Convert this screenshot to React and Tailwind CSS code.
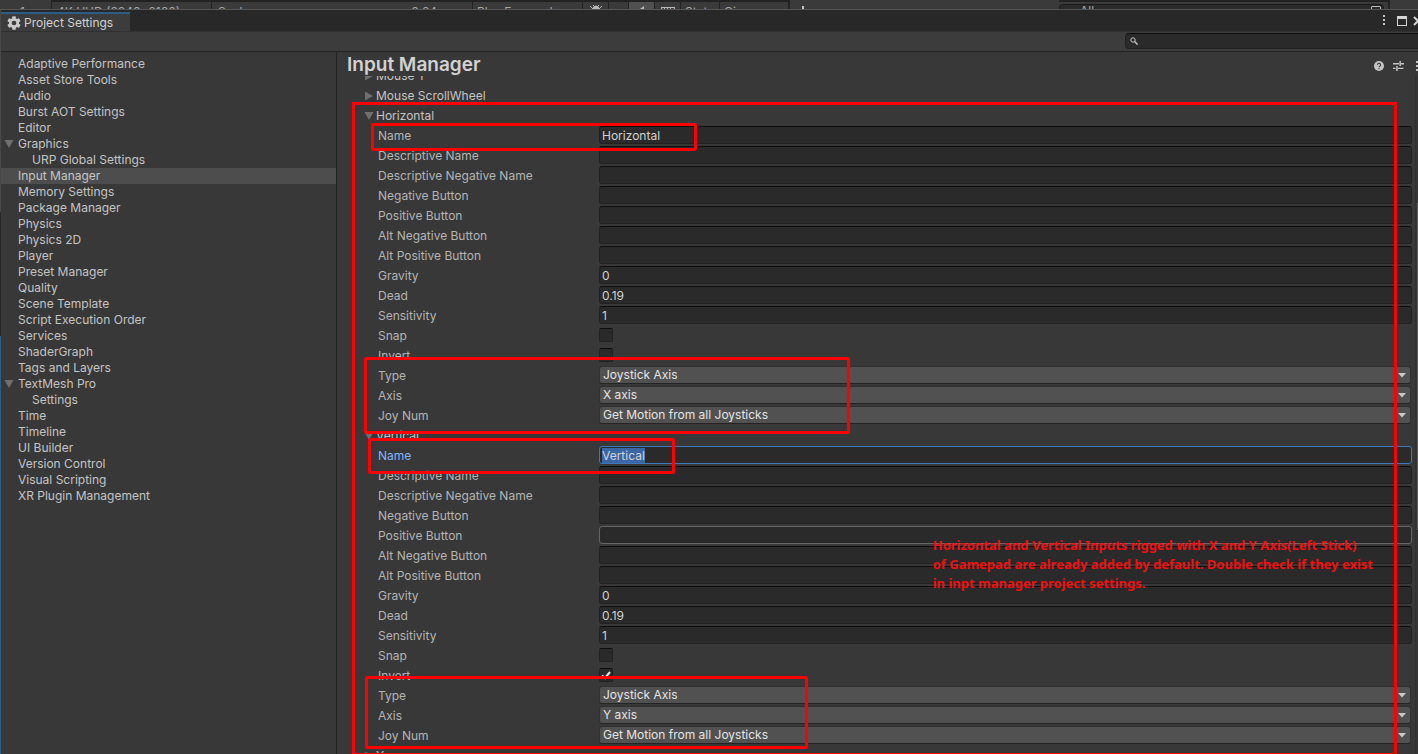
import React from "react";

const sections = [
  { name: "Adaptive Performance" },
  { name: "Asset Store Tools" },
  { name: "Audio" },
  { name: "Burst AOT Settings" },
  { name: "Editor" },
  { name: "Graphics", open: true },
  { name: "URP Global Settings", child: true },
  { name: "Input Manager", active: true },
  { name: "Memory Settings" },
  { name: "Package Manager" },
  { name: "Physics" },
  { name: "Physics 2D" },
  { name: "Player" },
  { name: "Preset Manager" },
  { name: "Quality" },
  { name: "Scene Template" },
  { name: "Script Execution Order" },
  { name: "Services" },
  { name: "ShaderGraph" },
  { name: "Tags and Layers" },
  { name: "TextMesh Pro", open: true },
  { name: "Settings", child: true },
  { name: "Time" },
  { name: "Timeline" },
  { name: "UI Builder" },
  { name: "Version Control" },
  { name: "Visual Scripting" },
  { name: "XR Plugin Management" },
];

function axisRows(name, axis, inverted) {
  return [
    { label: "Name", value: name, focused: name === "Vertical" },
    { label: "Descriptive Name", value: "" },
    { label: "Descriptive Negative Name", value: "" },
    { label: "Negative Button", value: "" },
    { label: "Positive Button", value: "", hovered: name === "Vertical" },
    { label: "Alt Negative Button", value: "" },
    { label: "Alt Positive Button", value: "" },
    { label: "Gravity", value: "0" },
    { label: "Dead", value: "0.19" },
    { label: "Sensitivity", value: "1" },
    { label: "Snap", kind: "check", value: false },
    { label: "Invert", kind: "check", value: inverted },
    { label: "Type", kind: "select", value: "Joystick Axis" },
    { label: "Axis", kind: "select", value: axis },
    { label: "Joy Num", kind: "select", value: "Get Motion from all Joysticks" },
  ];
}

const Arrow = ({ open, className = "" }) => (
  <svg viewBox="0 0 10 10" className={`h-[10px] w-[10px] shrink-0 fill-[#6f6f6f] ${className}`} aria-hidden="true">
    {open ? <path d="M0.5 1h9L5 9z" /> : <path d="M1 0.5v9L9 5z" />}
  </svg>
);

const Gear = () => (
  <svg viewBox="1.5 1.5 21 21" className="h-[14px] w-[14px] fill-[#c9c9c9]" aria-hidden="true">
    <path d="M19.43 12.98c.04-.32.07-.64.07-.98s-.03-.66-.07-.98l2.11-1.65c.19-.15.24-.42.12-.64l-2-3.46c-.12-.22-.39-.3-.61-.22l-2.49 1c-.52-.4-1.08-.73-1.69-.98l-.38-2.65A.49.49 0 0 0 14 2h-4c-.25 0-.46.18-.49.42l-.38 2.65c-.61.25-1.17.59-1.69.98l-2.49-1c-.23-.09-.49 0-.61.22l-2 3.46c-.13.22-.07.49.12.64l2.11 1.65c-.04.32-.07.65-.07.98s.03.66.07.98l-2.11 1.65c-.19.15-.24.42-.12.64l2 3.46c.12.22.39.3.61.22l2.49-1c.52.4 1.08.73 1.69.98l.38 2.65c.03.24.24.42.49.42h4c.25 0 .46-.18.49-.42l.38-2.65c.61-.25 1.17-.59 1.69-.98l2.49 1c.23.09.49 0 .61-.22l2-3.46c.12-.22.07-.49-.12-.64l-2.11-1.65zM12 15.5a3.5 3.5 0 1 1 0-7 3.5 3.5 0 0 1 0 7z" />
  </svg>
);

const Dots = () => (
  <svg viewBox="0 0 3 11" className="h-[11px] w-[3px] shrink-0 fill-[#c4c4c4]" shapeRendering="crispEdges" aria-hidden="true">
    <path d="M0 0h2v2H0zM0 4h2v2H0zM0 8h2v2H0z" />
  </svg>
);

function Field({ id, row }) {
  if (row.kind === "check") {
    return (
      <span className="relative mt-[2px] flex h-[14px] w-[14px]">
        <input
          id={id}
          type="checkbox"
          defaultChecked={row.value}
          className="peer h-[14px] w-[14px] appearance-none rounded-[2px] border border-[#212121] border-t-[#0d0d0d] bg-[#2a2a2a]"
        />
        <svg viewBox="0 0 14 14" className="pointer-events-none absolute inset-0 hidden h-[14px] w-[14px] fill-none stroke-[#e4e4e4] stroke-2 peer-checked:block" aria-hidden="true">
          <path d="M3 7.5l3 2.5L11 4" />
        </svg>
      </span>
    );
  }
  if (row.kind === "select") {
    return (
      <span className="relative flex min-w-0 flex-1 pr-px">
        <select
          id={id}
          defaultValue={row.value}
          className="h-[18px] w-full appearance-none rounded-[3px] border border-[#303030] border-b-[#242424] bg-[#515151] pr-5 pl-[3px] text-[#e4e4e4]"
        >
          <option>{row.value}</option>
        </select>
        <svg viewBox="0 0 10 5" className="pointer-events-none absolute top-[7px] right-[5px] h-[5px] w-[10px] fill-[#c8c8c8]" aria-hidden="true">
          <path d="M1 0h8L5 4.5z" />
        </svg>
      </span>
    );
  }
  const border = row.focused
    ? "border-[#3a79bb]"
    : row.hovered
      ? "border-[#656565]"
      : "border-[#212121] border-t-[#0d0d0d]";
  return (
    <span className="relative flex min-w-0 flex-1">
      <input
        id={id}
        type="text"
        defaultValue={row.focused ? "" : row.value}
        className={`h-[18px] w-full rounded-[3px] border bg-[#2a2a2a] px-[2px] text-[#d2d2d2] outline-none ${border}`}
      />
      {row.focused && (
        <span className="pointer-events-none absolute top-[2px] left-[3px] h-[15px] bg-[#3a66a5] leading-[15px] text-[#d2d2d2]">{row.value}</span>
      )}
    </span>
  );
}

function Foldout({ name, open }) {
  return (
    <button type="button" className="flex h-5 w-full items-center gap-[2px] pl-[27px] text-left text-[#c4c4c4]">
      <Arrow open={open} />
      {name}
    </button>
  );
}

function Axis({ name, axis, inverted }) {
  return (
    <section>
      <Foldout name={name} open />
      {axisRows(name, axis, inverted).map((row) => {
        const id = `${name}-${row.label}`.replaceAll(" ", "-");
        return (
          <div key={row.label} className="flex h-5 items-start pr-[6px] pl-[41px]">
            <label htmlFor={id} className={`w-[221px] shrink-0 leading-5 ${row.focused ? "text-[#81b4ff]" : "text-[#b4b4b4]"}`}>
              {row.label}
            </label>
            <Field id={id} row={row} />
          </div>
        );
      })}
    </section>
  );
}

function BackWindow() {
  return (
    <div className="flex h-[10px] shrink-0 overflow-hidden border-b border-[#555] bg-[#3a3a3a] leading-4 whitespace-nowrap text-[#a8a8a8]">
      <div className="w-[52px] shrink-0 border-r border-[#222] pt-1 pl-5">1</div>
      <div className="w-40 shrink-0 border-t-2 border-r border-[#222] pt-[2px] pl-[5px]">4K UHD (3840x2160)</div>
      <div className="flex w-[261px] shrink-0 gap-[162px] border-t-2 border-r border-[#222] pt-[2px] pl-[6px]">
        <span>Scale</span>
        <span>0.64</span>
      </div>
      <div className="w-[110px] shrink-0 border-t-2 border-r border-[#222] pt-[2px] pl-1">Play Focused</div>
      <div className="flex w-[26px] shrink-0 justify-center border-t-2 border-r border-[#222] pt-[2px]">
        <svg viewBox="0 0 14 12" className="h-3 w-[14px] fill-[#b8b8b8] stroke-[#b8b8b8]" aria-hidden="true">
          <path d="M4 5a3 3 0 0 1 6 0v4a3 3 0 0 1-6 0zM4 1l2 2M10 1L8 3M1 2l3 3M13 2l-3 3M1 6h12" />
        </svg>
      </div>
      <div className="w-5 shrink-0 border-t-2 border-r border-[#222]" />
      <div className="flex w-[26px] shrink-0 justify-center border-t-2 border-r border-[#222] bg-[#505050] pt-1">
        <svg viewBox="0 0 10 10" className="h-[10px] w-[10px] fill-[#b8b8b8]" aria-hidden="true">
          <path d="M0 3h3l4-3v10L3 7H0z" />
        </svg>
      </div>
      <div className="flex w-[26px] shrink-0 justify-center border-t-2 border-r border-[#222] pt-1">
        <svg viewBox="0 0 14 8" className="h-2 w-[14px] fill-none stroke-[#b8b8b8]" shapeRendering="crispEdges" aria-hidden="true">
          <path d="M0.5 8V1.5h13V8M3.5 2v6M6.5 2v6M9.5 2v6" />
        </svg>
      </div>
      <div className="w-[39px] shrink-0 border-t-2 border-r border-[#222] pt-[2px] pl-1">Stats</div>
      <div className="w-[70px] shrink-0 border-t-2 border-r-2 border-[#222] pt-[2px] pl-1">Gizmos</div>
      <div className="flex min-w-0 flex-1 items-start pt-[6px] pl-3">
        <span className="h-4 w-[2px] bg-[#c4c4c4]" />
      </div>
      <div className="flex w-[331px] shrink-0 border-t-2 border-r-2 border-[#222] pt-[2px] pr-1">
        <div className="flex h-5 flex-1 justify-between rounded-[4px] border border-[#1a1a1a] bg-[#2a2a2a] pr-[2px] pl-5">
          <span className="leading-3">All</span>
          <span className="mt-px h-3 w-[10px] rounded-[1px] border border-[#b8b8b8]" />
        </div>
      </div>
      <div className="w-7 shrink-0" />
    </div>
  );
}

export default function App() {
  return (
    <div className="flex h-screen flex-col overflow-hidden bg-[#383838] font-['Inter','Liberation_Sans',sans-serif] text-[12px] leading-4 text-[#c4c4c4]">
      <BackWindow />
      <div className="flex min-h-0 flex-1">
        <div className="flex w-px shrink-0 flex-col" aria-hidden="true">
          <div className="h-[202px] bg-[#484848]" />
          <div className="h-[124px] bg-[#282828]" />
          <div className="flex-1 bg-[#2c5d87]" />
        </div>
        <div className="flex min-w-0 flex-1 flex-col">
          <header className="flex h-[21px] shrink-0 items-stretch justify-between bg-[#282828]">
            <div className="mt-[2px] flex w-[129px] items-center gap-[3px] border-t-2 border-[#2c5d87] bg-[#3c3c3c] pl-[6px] text-[#d2d2d2]">
              <Gear />
              <h1 className="whitespace-nowrap">Project Settings</h1>
            </div>
            <div className="flex items-center overflow-hidden">
              <button type="button" aria-label="Window menu" className="mr-[11px]">
                <Dots />
              </button>
              <button type="button" aria-label="Maximize" className="mr-[6px] h-[10px] w-[10px] border border-t-[3px] border-[#d2d2d2]" />
              <button type="button" aria-label="Close" className="w-[5px] overflow-hidden">
                <svg viewBox="0 0 10 10" className="h-[10px] w-[10px] stroke-[#d2d2d2] stroke-2" aria-hidden="true">
                  <path d="M1 1l8 8M9 1L1 9" />
                </svg>
              </button>
            </div>
          </header>
          <div className="flex h-[21px] shrink-0 items-start justify-end border-t border-b border-t-[#303030] border-b-[#232323] bg-[#3c3c3c] pt-px">
            <label className="flex h-4 w-[293px] items-center gap-1 rounded-l-[4px] border border-r-0 border-[#212121] border-t-[#0d0d0d] bg-[#2a2a2a] pl-1">
              <svg viewBox="0 0 8 8" className="h-2 w-2 shrink-0 fill-none stroke-[#c4c4c4]" aria-hidden="true">
                <circle cx="3" cy="3" r="2.2" />
                <path d="M4.6 4.6L7.6 7.6" strokeWidth="1.4" />
              </svg>
              <input type="search" aria-label="Search settings" className="min-w-0 flex-1 bg-transparent outline-none" />
            </label>
          </div>
          <div className="flex min-h-0 flex-1">
            <nav className="flex w-[336px] shrink-0 flex-col border-r border-[#232323] pt-1">
              {sections.map((s) => (
                <a
                  key={s.name}
                  href="#settings"
                  className={`flex h-4 items-center gap-1 whitespace-nowrap ${s.child ? "pl-[31px]" : s.open ? "pl-[3px]" : "pl-[17px]"} ${s.active ? "bg-[#4d4d4d]" : ""}`}
                >
                  {s.open && <Arrow open />}
                  {s.name}
                </a>
              ))}
            </nav>
            <main className="relative flex min-w-0 flex-1 flex-col">
              <div className="flex h-6 shrink-0 items-center justify-between pl-[10px]">
                <h2 className="pt-[2px] text-[19px] leading-6 font-semibold text-[#d2d2d2]">Input Manager</h2>
                <div className="mt-1 flex items-center overflow-hidden">
                  <button type="button" aria-label="Help" className="mr-[9px]">
                    <svg viewBox="0 0 10 10" className="h-[10px] w-[10px] fill-[#c4c4c4]" aria-hidden="true">
                      <circle cx="5" cy="5" r="5" />
                      <path d="M3.4 3.9a1.6 1.6 0 1 1 2.4 1.3q-.8.4-.8 1.1M5 7.2v1.1" className="fill-none stroke-[#383838]" strokeWidth="1.1" />
                    </svg>
                  </button>
                  <button type="button" aria-label="Presets" className="mr-3">
                    <svg viewBox="0 0 11 10" className="h-[10px] w-[11px] fill-[#c4c4c4]" aria-hidden="true">
                      <path d="M0 2h6v1.4H0zM6.4 0h1.5v5H6.4zM8 2h3v1.4H8zM0 6.7h2.6v1.4H0zM3.2 5h1.5v5H3.2zM5 6.7h5.5v1.4H5z" />
                    </svg>
                  </button>
                  <button type="button" aria-label="More" className="w-[2px] overflow-hidden">
                    <Dots />
                  </button>
                </div>
              </div>
              <div className="flex min-h-0 flex-1 overflow-hidden">
                <div className="-mt-[10px] min-w-0 flex-1">
                  <Foldout name="Mouse Y" />
                  <Foldout name="Mouse ScrollWheel" />
                  <Axis name="Horizontal" axis="X axis" inverted={false} />
                  <Axis name="Vertical" axis="Y axis" inverted />
                  <Foldout name="Y" />
                </div>
                <div className="-ml-[3px] w-[3px] shrink-0 border-l border-[#303030] bg-[#353535] pt-[127px] pl-px" aria-hidden="true">
                  <div className="h-[327px] bg-[#5f5f5f]" />
                </div>
              </div>

              <div className="pointer-events-none absolute top-[50px] right-[21px] left-[15px] h-[654px] border-[3px] border-[#ff0000]" />
              <div className="pointer-events-none absolute top-[71px] left-[34px] h-7 w-[326px] rounded-[2px] border-[3px] border-[#ff0000]" />
              <div className="pointer-events-none absolute top-[305px] left-[27px] h-[77px] w-[486px] rounded-[2px] border-[3px] border-[#ff0000]" />
              <div className="pointer-events-none absolute top-[386px] left-[31px] h-9 w-[307px] rounded-[2px] border-[3px] border-[#ff0000]" />
              <div className="pointer-events-none absolute top-[624px] left-[28px] h-[73px] w-[443px] rounded-[2px] border-[3px] border-[#ff0000]" />
              <p className="pointer-events-none absolute top-[484px] right-[45px] font-['Noto_Sans','Open_Sans',sans-serif] text-[13px] leading-[19px] font-bold whitespace-nowrap text-[#ee1111]">
                Horizontal and Vertical Inputs rigged with X and Y Axis(Left Stick)
                <br />
                of Gamepad are already added by default. Double check if they exist
                <br />
                in inpt manager project settings.
              </p>
            </main>
          </div>
        </div>
      </div>
    </div>
  );
}
